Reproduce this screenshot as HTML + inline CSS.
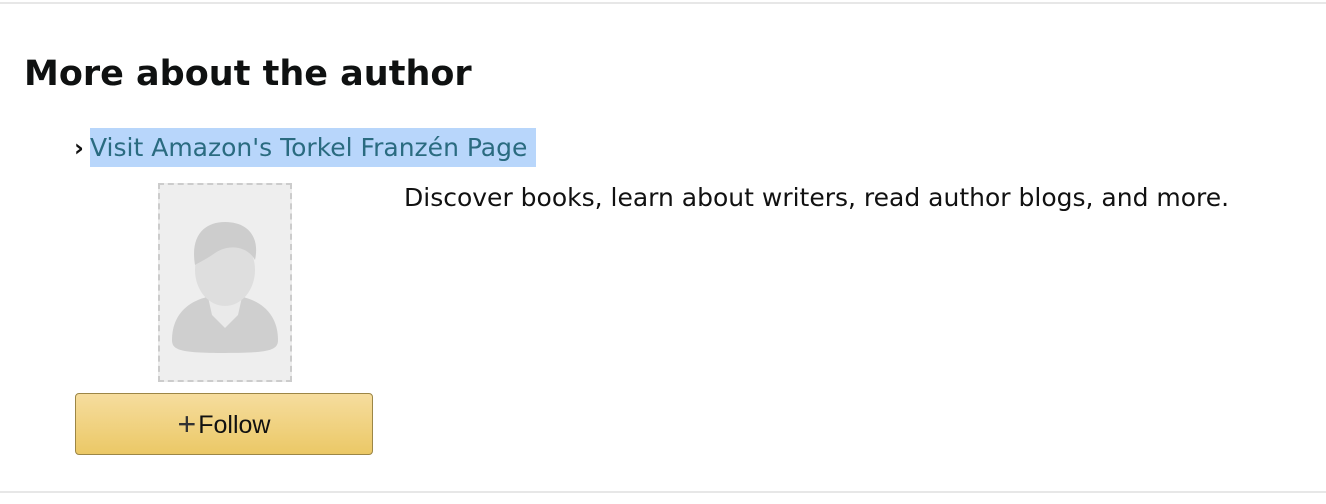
<!DOCTYPE html>
<html><head><style>
body{margin:0;width:1326px;height:504px;background:#fff;font-family:"DejaVu Sans","Liberation Sans",sans-serif;position:relative;overflow:hidden}
.line{position:absolute;left:0;width:1326px;height:2px;background:#e7e7e7}
h2{position:absolute;left:24px;top:50px;margin:0;font-size:35px;font-weight:bold;color:#0f1111;line-height:48px;white-space:nowrap}
.chev{position:absolute;left:74px;top:133px;font-size:24px;color:#111;line-height:30px;font-weight:bold}
.link{position:absolute;left:90px;top:128px;height:39px;width:446px;background:#b8d6fb;color:#2a6b80;font-size:25px;line-height:39px;white-space:nowrap;overflow:hidden}
.img{position:absolute;left:158px;top:183px;width:130px;height:195px;border:2px dashed #ccc;background:#eee}
.btn{position:absolute;left:75px;top:393px;width:296px;height:60px;border:1px solid #9c8646;border-radius:4px;background:linear-gradient(#f6dd9e,#ebc866);font-size:25px;text-align:center;line-height:60px;color:#111;font-family:"Liberation Sans",sans-serif}
.desc{position:absolute;left:404px;top:183px;font-size:25px;color:#111;line-height:30px;white-space:nowrap}
</style></head><body>
<div class="line" style="top:2px"></div>
<h2>More about the author</h2>
<div class="chev">›</div>
<div class="link">Visit Amazon's Torkel Franzén Page</div>
<div class="img"><svg width="130" height="195" viewBox="0 0 130 195">
<path d="M12 155 C12 125 35 110 65 110 C95 110 118 125 118 155 C118 165 110 168 65 168 C20 168 12 165 12 155Z" fill="#cfcfcf"/>
<path d="M48 112 L82 112 L78 130 L65 143 L52 130Z" fill="#eaeaea"/>
<ellipse cx="65" cy="85" rx="30" ry="36" fill="#dedede"/>
<path d="M35 80 C30 50 45 37 65 37 C88 37 100 52 95 75 C88 62 70 58 55 68 C45 75 38 78 35 80Z" fill="#cdcdcd"/>
</svg></div>
<div class="btn"><span style="font-size:32px;color:#333;vertical-align:-2px;margin-right:2px">+</span>Follow</div>
<div class="desc">Discover books, learn about writers, read author blogs, and more.</div>
<div class="line" style="top:491px"></div>
</body></html>
